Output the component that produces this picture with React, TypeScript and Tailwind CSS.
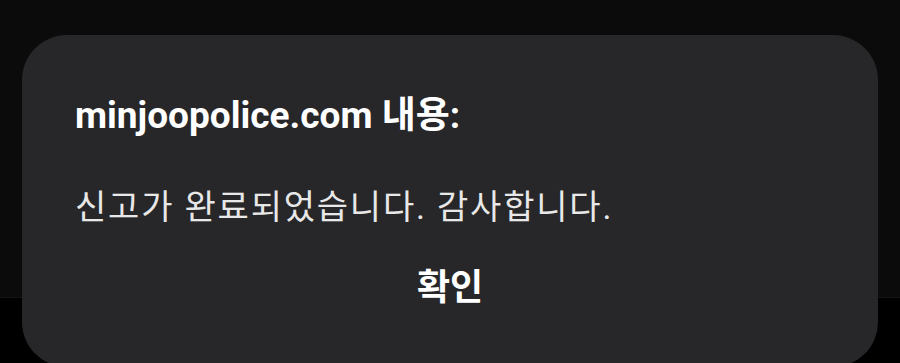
export default function App() {
  return (
    <div className="relative w-[900px] h-[363px] overflow-hidden bg-black font-['Roboto','Noto_Sans_CJK_KR',sans-serif]">
      {/* page behind the dialog */}
      <div className="flex flex-col h-full">
        <div className="h-[298px] bg-[#0b0b0b] border-b border-[#161616]" />
        <div className="flex-1 bg-black" />
      </div>

      {/* alert dialog */}
      <div className="absolute left-[22px] top-[35px] w-[856px] h-[332px] rounded-[45px] bg-[#272729] flex flex-col pl-[53px] pr-[53px] pt-[59px]">
        <h2 className="text-[37px] leading-[44px] font-bold text-white">minjoopolice.com 내용:</h2>
        <p className="mt-[47px] text-[34px] leading-[44px] tracking-[1.8px] text-[#e8e8e8]">
          신고가 완료되었습니다. 감사합니다.
        </p>
        <div className="mt-[37px] flex justify-center -ml-[53px] -mr-[53px]">
          <button className="text-[36px] leading-[44px] font-bold text-white">확인</button>
        </div>
      </div>
    </div>
  );
}
